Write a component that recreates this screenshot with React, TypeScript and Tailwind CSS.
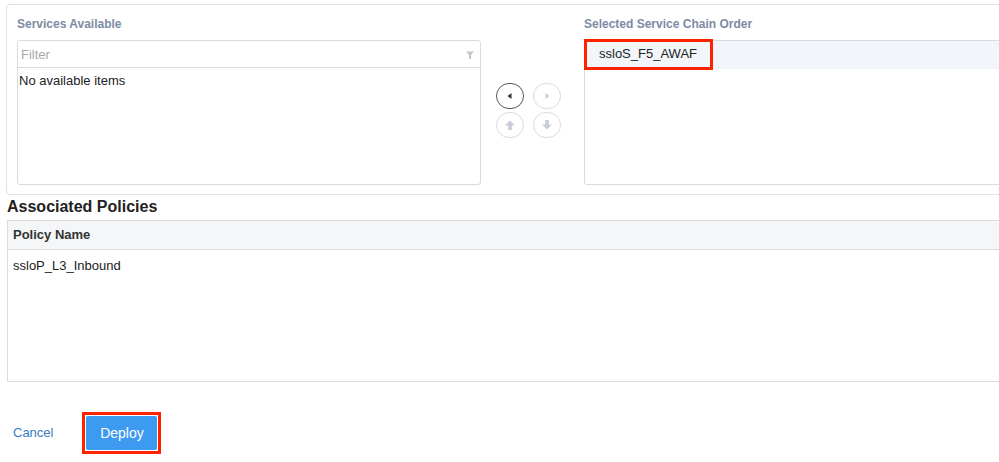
import React from "react";

const font = { fontFamily: '"Liberation Sans", Arial, sans-serif' };

const CircleBtn = ({ dir, active }: { dir: "left" | "right" | "up" | "down"; active?: boolean }) => (
    <div
        className={`flex h-[26px] w-[28px] items-center justify-center rounded-full border ${active ? "border-[#555]" : "border-[#d8dbe4]"}`}
    >
        <svg width="12" height="12" viewBox="0 0 12 12">
            {dir === "left" && <polygon points="7.5,3 3.5,6 7.5,9" fill="#333" />}
            {dir === "right" && <polygon points="4.5,3 8.5,6 4.5,9" fill="#c8ccd6" />}
            {dir === "up" && (
                <path d="M6 1.5 L11 6.5 H7.8 V11 H4.2 V6.5 H1 Z" fill="#c8ccd6" />
            )}
            {dir === "down" && (
                <path d="M6 10.5 L11 5.5 H7.8 V1 H4.2 V5.5 H1 Z" fill="#c8ccd6" />
            )}
        </svg>
    </div>
);

export default function App() {
    return (
        <div className="h-[462px] w-[999px] overflow-hidden bg-white" style={font}>
            {/* service chain panel */}
            <div className="ml-[6px] mt-[4px] flex h-[191px] w-[1010px] gap-[15px] rounded-[4px] border border-[#dfe1e8] pl-[10px] pt-[12px]">
                <div className="flex w-[464px] flex-col">
                    <h3 className="h-[23px] text-[12px] font-bold leading-[14px] text-[#7d8ba4]">Services Available</h3>
                    <div className="flex h-[145px] flex-col rounded-[3px] border border-[#d9dbe0]">
                        <div className="flex h-[27px] items-center justify-between border-b border-[#d9dbe0] pl-[3px] pr-[5px] pt-px">
                            <span className="text-[13px] text-[#a9a9a9]">Filter</span>
                            <svg width="10" height="10" viewBox="0 0 10 10">
                                <path d="M1 1.5 H9 L6 5 V9 H4 V5 Z" fill="#c4c6cc" />
                            </svg>
                        </div>
                        <div className="pl-[1px] pt-[5px] text-[13px] leading-[16px] text-[#222]">No available items</div>
                    </div>
                </div>
                <div className="flex w-[73px] flex-col gap-[3px] pt-[66px]">
                    <div className="flex gap-[9px]">
                        <CircleBtn dir="left" active />
                        <CircleBtn dir="right" />
                    </div>
                    <div className="flex gap-[9px]">
                        <CircleBtn dir="up" />
                        <CircleBtn dir="down" />
                    </div>
                </div>
                <div className="flex w-[430px] flex-col">
                    <h3 className="h-[23px] text-[12px] font-bold leading-[14px] text-[#7d8ba4]">Selected Service Chain Order</h3>
                    <div className="h-[145px] rounded-[3px] border border-[#d9dbe0]">
                        <div className="flex h-[28px] items-center bg-[#f2f5f9]">
                            <div className="-ml-px -mt-[2px] flex h-[31px] w-[129px] items-center border-[3px] border-[#ff2200] pl-[12px] text-[13px] text-[#222]">
                                ssloS_F5_AWAF
                            </div>
                        </div>
                    </div>
                </div>
            </div>

            {/* associated policies */}
            <h2 className="ml-[7px] mt-[2px] text-[16px] font-bold leading-[20px] text-[#222]">Associated Policies</h2>
            <div className="ml-[7px] mt-[3px] h-[162px] w-[1000px] border border-[#dcdcdc]">
                <div className="flex h-[29px] items-center border-b border-[#dcdcdc] bg-[#f4f6f8] pl-[5px] text-[13px] font-bold text-[#333]">
                    Policy Name
                </div>
                <div className="pl-[5px] pt-[8px] text-[13px] leading-[16px] text-[#222]">ssloP_L3_Inbound</div>
            </div>

            {/* footer actions */}
            <div className="mt-[30px] flex items-center gap-[29px] pl-[13px]">
                <span className="text-[13px] text-[#3b7cc2]">Cancel</span>
                <div className="border-[3px] border-[#ff2200] p-px">
                    <button className="h-[34px] w-[71px] rounded-[2px] bg-[#3c9af0] text-[14px] text-white">Deploy</button>
                </div>
            </div>
        </div>
    );
}
